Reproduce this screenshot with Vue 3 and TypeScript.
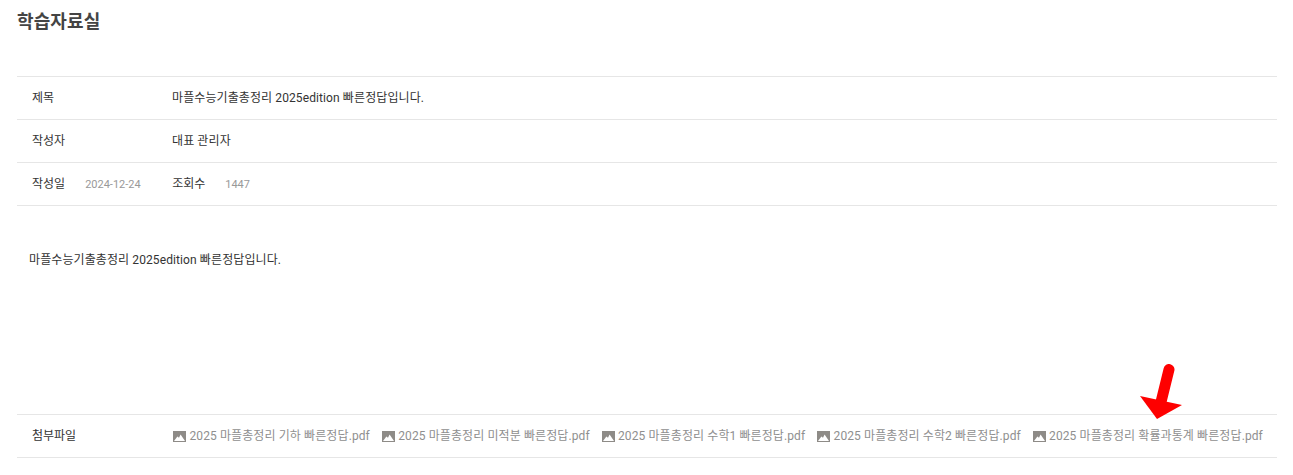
<template>
  <div class="board">
    <h2 class="board-title">학습자료실</h2>

    <div class="row">
      <span class="label wide">제목</span>
      <span class="value">{{ title }}</span>
    </div>
    <div class="row">
      <span class="label wide">작성자</span>
      <span class="value">대표 관리자</span>
    </div>
    <div class="row">
      <span class="label">작성일</span>
      <span class="meta date">2024-12-24</span>
      <span class="label views">조회수</span>
      <span class="meta">1447</span>
    </div>

    <div class="content">{{ title }}</div>

    <div class="row attach">
      <span class="label wide">첨부파일</span>
      <div class="files">
        <a v-for="file in files" :key="file" class="file" href="#">
          <svg class="file-icon" width="13" height="11" viewBox="0 0 13 11">
            <rect width="13" height="11" fill="#8e8b87" />
            <path d="M1 10 L4.4 5.4 L6 6.8 L7.6 3.6 L12 10 Z" fill="#fff" />
          </svg>{{ file }}
        </a>
      </div>
    </div>

    <svg class="arrow" width="46" height="58" viewBox="0 0 46 58">
      <path d="M29 5.5 L21 38" stroke="#fe0000" stroke-width="11" stroke-linecap="round" fill="none" />
      <path d="M0 32 L42 41 L17 55 Z" fill="#fe0000" />
    </svg>
  </div>
</template>

<script setup lang="ts">
const title = '마플수능기출총정리 2025edition 빠른정답입니다.'

const files: string[] = [
  '2025 마플총정리 기하 빠른정답.pdf',
  '2025 마플총정리 미적분 빠른정답.pdf',
  '2025 마플총정리 수학1 빠른정답.pdf',
  '2025 마플총정리 수학2 빠른정답.pdf',
  '2025 마플총정리 확률과통계 빠른정답.pdf'
]
</script>

<style>
html,
body {
  margin: 0;
  background: #fff;
}
</style>

<style scoped>
.board {
  position: relative;
  width: 1260px;
  margin-left: 17px;
  font-family: Roboto, "Noto Sans CJK KR", sans-serif;
  font-size: 12px;
  line-height: 16px;
  letter-spacing: 0.1px;
  color: #333;
}

.board-title {
  margin: 0;
  height: 76px;
  padding-top: 9px;
  box-sizing: border-box;
  font-size: 18px;
  line-height: 25px;
  font-weight: 700;
  color: #444;
}

.row {
  display: flex;
  align-items: center;
  height: 43px;
  box-sizing: border-box;
  padding-left: 15px;
  border-top: 1px solid #e6e6e6;
}

.attach {
  height: 44px;
  border-bottom: 1px solid #e6e6e6;
}

.label {
  flex-shrink: 0;
  letter-spacing: 0;
}

.label.wide {
  width: 140px;
}

.value {
  color: #333;
}

.meta {
  padding-top: 2px;
  color: #999;
  font-size: 11px;
  letter-spacing: 0;
}

.date {
  width: 87px;
  margin-left: 20px;
}

.views {
  margin-right: 20px;
}

.content {
  height: 209px;
  box-sizing: border-box;
  padding: 46px 12px 0;
  border-top: 1px solid #e6e6e6;
}

.files {
  display: flex;
  gap: 10.8px;
}

.file {
  display: flex;
  align-items: center;
  color: #8f8f8f;
  text-decoration: none;
  white-space: nowrap;
}

.file-icon {
  margin: 1px 3.5px 0 1px;
}

.arrow {
  position: absolute;
  left: 1123px;
  top: 364px;
}
</style>
